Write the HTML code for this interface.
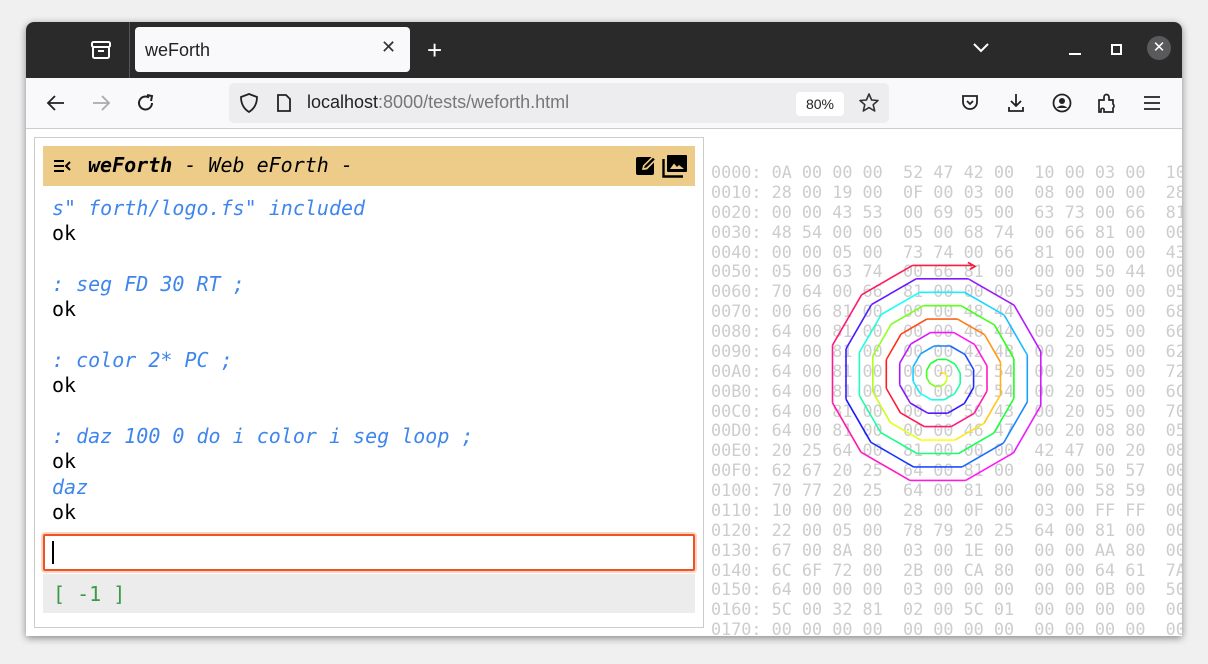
<!DOCTYPE html>
<html><head><meta charset="utf-8"><style>
*{margin:0;padding:0;box-sizing:border-box}
body{width:1208px;height:664px;background:#f0f0f0;position:relative;overflow:hidden;font-family:"Liberation Sans",sans-serif}
.win{position:absolute;left:26px;top:22px;width:1156px;height:614px;background:#fff;border-radius:8px 8px 0 0;overflow:hidden;box-shadow:0 2px 8px rgba(0,0,0,.45)}
.tabs{position:absolute;left:0;top:0;width:1156px;height:56px;background:#2b2a2b}
.tab{position:absolute;left:109px;top:5px;width:275px;height:45px;background:#f9f9fb;border-radius:4px;font-size:18px;color:#222;padding:13px 0 0 10px}
.tb{position:absolute;left:0;top:56px;width:1156px;height:51px;background:#f9f9fb;border-bottom:1px solid #ccc}
.url{position:absolute;left:203px;top:5px;width:660px;height:40px;background:#ededf0;border-radius:5px}
.ic{position:absolute}
.panel{position:absolute;left:8px;top:115px;width:670px;height:491px;border:1px solid #ccc}
.hdr{position:absolute;left:8px;top:8px;width:652px;height:40px;background:#edcb89}
.hdr .t{position:absolute;left:45px;top:7px;font:italic 20px "DejaVu Sans Mono",monospace;color:#000}
.con{position:absolute;left:17px;top:58px;font:20px/25.33px "DejaVu Sans Mono",monospace;white-space:pre;color:#000}
.b{color:#3f86ec;font-style:italic}
.inp{position:absolute;left:8px;top:396px;width:652px;height:37px;border:2px solid #ea5523;box-shadow:0 0 0 2px #fcd3c4;border-radius:2px}
.st{position:absolute;left:8px;top:436px;width:652px;height:39px;background:#ececec;font:20px "DejaVu Sans Mono",monospace;color:#3a9a4a;padding:8px 0 0 10px;white-space:pre}
.hex{position:absolute;left:685px;top:141px;font:16.8px/19.87px "DejaVu Sans Mono",monospace;color:#cdcdcd;white-space:pre}
</style></head><body>
<div class="win">
 <div class="tabs">
  <svg class="ic" style="left:64px;top:18px" width="22" height="20" viewBox="0 0 22 20"><rect x="2" y="2" width="18" height="5" rx="1.5" fill="none" stroke="#fff" stroke-width="2"/><rect x="3" y="7" width="16" height="11" rx="1.5" fill="none" stroke="#fff" stroke-width="2"/><line x1="8" y1="11" x2="14" y2="11" stroke="#fff" stroke-width="2"/></svg>
  <div style="position:absolute;left:103px;top:0;width:1px;height:56px;background:#555"></div>
  <div class="tab">weForth<span style="position:absolute;left:246px;top:10px;font-size:18px;color:#333">✕</span></div>
  <div style="position:absolute;left:401px;top:13px;color:#fff;font-size:26px;font-weight:300">+</div>
  <svg class="ic" style="left:946px;top:20px" width="18" height="12"><path d="M2 2 L9 9 L16 2" fill="none" stroke="#fff" stroke-width="2"/></svg>
  <div style="position:absolute;left:1043px;top:31px;width:12px;height:2px;background:#fff"></div>
  <div style="position:absolute;left:1085px;top:22px;width:11px;height:11px;border:2px solid #fff"></div>
  <div style="position:absolute;left:1121px;top:14px;width:24px;height:24px;border-radius:50%;background:#5a595b;color:#fff;font-size:15px;text-align:center;line-height:24px">✕</div>
 </div>
 <div class="tb">
  <svg class="ic" style="left:20px;top:16px" width="20" height="18" viewBox="0 0 20 18"><path d="M18 9 H3 M9 2 L2 9 L9 16" fill="none" stroke="#222" stroke-width="1.8"/></svg>
  <svg class="ic" style="left:65px;top:16px" width="20" height="18" viewBox="0 0 20 18"><path d="M2 9 H17 M11 2 L18 9 L11 16" fill="none" stroke="#aaa" stroke-width="1.8"/></svg>
  <svg class="ic" style="left:110px;top:15px" width="20" height="20" viewBox="0 0 20 20"><path d="M16 10 A6.5 6.5 0 1 1 13 4.5" fill="none" stroke="#222" stroke-width="2"/><path d="M11 2 L16 3 L15 8" fill="none" stroke="#222" stroke-width="2"/></svg>
  <div class="url">
   <svg class="ic" style="left:10px;top:9px" width="20" height="22" viewBox="0 0 20 22"><path d="M10 2 L18 5 Q18 15 10 20 Q2 15 2 5 Z" fill="none" stroke="#222" stroke-width="1.8"/></svg>
   <svg class="ic" style="left:47px;top:10px" width="16" height="20" viewBox="0 0 16 20"><path d="M2 2 H10 L14 6 V18 H2 Z" fill="none" stroke="#222" stroke-width="1.8"/></svg>
   <div style="position:absolute;left:78px;top:9px;font-size:18px;color:#222">localhost<span style="color:#777">:8000/tests/weforth.html</span></div>
   <div style="position:absolute;left:567px;top:9px;width:48px;height:24px;background:#fff;border-radius:4px;font-size:14px;text-align:center;line-height:24px;color:#222">80%</div>
   <svg class="ic" style="left:629px;top:9px" width="22" height="22" viewBox="0 0 22 22"><path d="M11 2 L13.6 8 L20 8.5 L15.2 12.7 L16.7 19 L11 15.6 L5.3 19 L6.8 12.7 L2 8.5 L8.4 8 Z" fill="none" stroke="#333" stroke-width="1.6" stroke-linejoin="round"/></svg>
  </div>
  <svg class="ic" style="left:934px;top:15px" width="20" height="20" viewBox="0 0 20 20"><path d="M3 3 H17 V9 A7 7 0 0 1 3 9 Z" fill="none" stroke="#222" stroke-width="1.8"/><path d="M7 8 L10 11 L13 8" fill="none" stroke="#222" stroke-width="1.8"/></svg>
  <svg class="ic" style="left:980px;top:14px" width="20" height="22" viewBox="0 0 20 22"><path d="M10 2 V14 M5 9 L10 14 L15 9 M3 15 V19 H17 V15" fill="none" stroke="#222" stroke-width="1.8"/></svg>
  <svg class="ic" style="left:1026px;top:15px" width="20" height="20" viewBox="0 0 20 20"><circle cx="10" cy="10" r="8.5" fill="none" stroke="#222" stroke-width="1.8"/><circle cx="10" cy="8" r="3" fill="#222"/><path d="M4.5 15 Q10 10 15.5 15" fill="#222"/></svg>
  <svg class="ic" style="left:1070px;top:14px" width="22" height="22" viewBox="0 0 22 22"><path d="M3 8 H8 V5 A2.5 2.5 0 0 1 13 5 V8 H17 V12 A2.5 2.5 0 0 1 17 16 V20 H8 V17 A2 2 0 0 0 5 17 V20 H3 Z" fill="none" stroke="#222" stroke-width="1.7"/></svg>
  <svg class="ic" style="left:1117px;top:17px" width="18" height="16"><path d="M1 2 H17 M1 8 H17 M1 14 H17" stroke="#222" stroke-width="1.8"/></svg>
 </div>
 <div class="panel">
  <div class="hdr">
   <svg class="ic" style="left:10px;top:13px" width="18" height="14" viewBox="0 0 18 14"><path d="M1 2 H11 M1 7 H11 M1 12 H11 M17 3 L13 7 L17 11" fill="none" stroke="#000" stroke-width="2"/></svg>
   <div class="t"><b>weForth</b> - Web eForth -</div>
   <svg class="ic" style="left:592px;top:7px" width="24" height="24" viewBox="0 0 24 24"><rect x="1" y="4" width="18" height="18" rx="2" fill="#000"/><path d="M7 17 L8 12.5 L18 2.5 L22 6.5 L12 16.5 Z" fill="#edcb89"/><path d="M9 15 L9.7 13 L18 4.7 L19.8 6.5 L11.5 14.5 Z" fill="#000"/></svg>
   <svg class="ic" style="left:619px;top:8px" width="26" height="24" viewBox="0 0 26 24"><path d="M1.5 5 V22.5 H21" fill="none" stroke="#000" stroke-width="2.4"/><rect x="5" y="1" width="20" height="17" rx="1" fill="#000"/><path d="M8 15 L12 9.5 L15 13 L17 11 L22 15 Z" fill="#edcb89"/></svg>
  </div>
  <div class="con"><span class="b">s" forth/logo.fs" included</span>
ok

<span class="b">: seg FD 30 RT ;</span>
ok

<span class="b">: color 2* PC ;</span>
ok

<span class="b">: daz 100 0 do i color i seg loop ;</span>
ok
<span class="b">daz</span>
ok</div>
  <div class="inp"><div style="position:absolute;left:7px;top:5px;width:2px;height:23px;background:#000"></div></div>
  <div class="st">[ -1 ]</div>
 </div>
 <div class="hex">0000: 0A 00 00 00  52 47 42 00  10 00 03 00  10
0010: 28 00 19 00  0F 00 03 00  08 00 00 00  28
0020: 00 00 43 53  00 69 05 00  63 73 00 66  81
0030: 48 54 00 00  05 00 68 74  00 66 81 00  00
0040: 00 00 05 00  73 74 00 66  81 00 00 00  43
0050: 05 00 63 74  00 66 81 00  00 00 50 44  00
0060: 70 64 00 66  81 00 00 00  50 55 00 00  05
0070: 00 66 81 00  00 00 48 44  00 00 05 00  68
0080: 64 00 81 00  00 00 46 44  00 20 05 00  66
0090: 64 00 81 00  00 00 42 4B  00 20 05 00  62
00A0: 64 00 81 00  00 00 52 54  00 20 05 00  72
00B0: 64 00 81 00  00 00 4C 54  00 20 05 00  6C
00C0: 64 00 81 00  00 00 50 43  00 20 05 00  70
00D0: 64 00 81 00  00 00 46 47  00 20 08 80  05
00E0: 20 25 64 00  81 00 00 00  42 47 00 20  08
00F0: 62 67 20 25  64 00 81 00  00 00 50 57  00
0100: 70 77 20 25  64 00 81 00  00 00 58 59  00
0110: 10 00 00 00  28 00 0F 00  03 00 FF FF  00
0120: 22 00 05 00  78 79 20 25  64 00 81 00  00
0130: 67 00 8A 80  03 00 1E 00  00 00 AA 80  00
0140: 6C 6F 72 00  2B 00 CA 80  00 00 64 61  7A
0150: 64 00 00 00  03 00 00 00  00 00 0B 00  50
0160: 5C 00 32 81  02 00 5C 01  00 00 00 00  00
0170: 00 00 00 00  00 00 00 00  00 00 00 00  00</div>
 <svg id="sp" style="position:absolute;left:0;top:0" width="1156" height="614"></svg>
</div>
<script>
(function(){
 var s=document.getElementById('sp'),x=940-26,y=374-22,h=0,k=0.6,out='';
 for(var i=0;i<100;i++){
  var a=h*Math.PI/180,nx=x+Math.sin(a)*i*k,ny=y-Math.cos(a)*i*k;
  var hue=((350-(99-i)*6.9)%360+360)%360;
  out+='<line x1="'+x.toFixed(1)+'" y1="'+y.toFixed(1)+'" x2="'+nx.toFixed(1)+'" y2="'+ny.toFixed(1)+'" stroke="hsl('+hue.toFixed(0)+',100%,55%)" stroke-width="1.6"/>';
  x=nx;y=ny;h+=30;
 }
 out+='<path d="M'+(x-4)+' '+(y-3)+' L'+(x+3)+' '+(y+1)+' L'+(x-2)+' '+(y+4)+'" fill="none" stroke="#f02040" stroke-width="1.8"/>';
 s.innerHTML=out;
})();
</script>
</body></html>
